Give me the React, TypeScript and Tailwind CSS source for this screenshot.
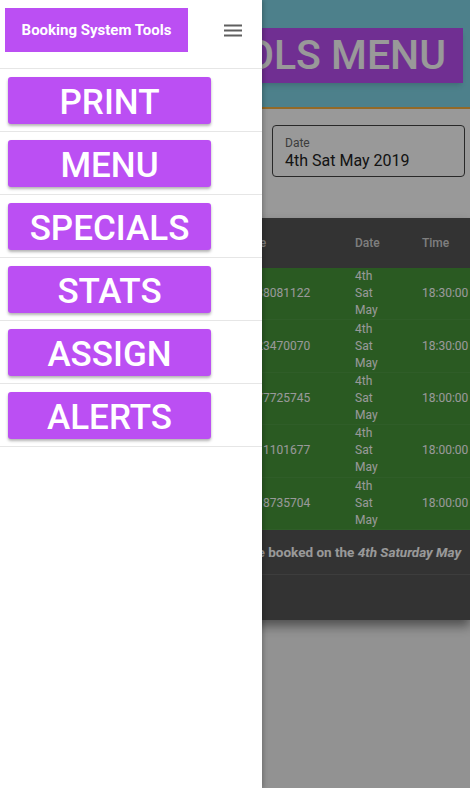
import { useState } from 'react';

interface Booking {
  name: string;
  phone: string;
  time: string;
}

const bookings: Booking[] = [
  { name: 'J. Clarke', phone: '07738081122', time: '18:30:00' },
  { name: 'S. Patel', phone: '07723470070', time: '18:30:00' },
  { name: 'M. Evans', phone: '07977725745', time: '18:00:00' },
  { name: 'R. Hughes', phone: '07811101677', time: '18:00:00' },
  { name: 'L. Owen', phone: '07718735704', time: '18:00:00' },
];

const menuItems = ['PRINT', 'MENU', 'SPECIALS', 'STATS', 'ASSIGN', 'ALERTS'];

function HamburgerIcon() {
  return (
    <svg width="18" height="13" viewBox="0 0 18 13" className="text-[#5f5f5f]">
      <rect x="0" y="0.5" width="18" height="2" fill="currentColor" />
      <rect x="0" y="5.5" width="18" height="2" fill="currentColor" />
      <rect x="0" y="10.5" width="18" height="2" fill="currentColor" />
    </svg>
  );
}

function BookingTable() {
  return (
    <div className="bg-[#555555] text-white shadow-[0_6px_10px_rgba(0,0,0,0.45)]">
      {/* Column headings */}
      <div className="grid h-[50px] grid-cols-[232px_123px_67px_48px] items-center text-[12px] font-medium text-white/75">
        <span className="pl-4">Name</span>
        <span>Phone</span>
        <span>Date</span>
        <span>Time</span>
      </div>

      {/* Rows */}
      {bookings.map((b) => (
        <div
          key={b.phone}
          className="grid h-[52.4px] grid-cols-[236px_119px_67px_48px] items-center border-b border-white/5 bg-[#46963a] text-[12px] leading-[17px]"
        >
          <span className="pl-4">{b.name}</span>
          <span>{b.phone}</span>
          <span className="flex flex-col">
            <span>4th</span>
            <span>Sat</span>
            <span>May</span>
          </span>
          <span>{b.time}</span>
        </div>
      ))}

      {/* Footer note */}
      <div className="flex h-[45px] items-center justify-end whitespace-nowrap border-b border-white/10 pr-[9px] text-[13.5px] font-bold">
        All tables are booked on the&nbsp;<i>4th Saturday May</i>
      </div>
      <div className="h-[45px]" />
    </div>
  );
}

export default function App() {
  const [date] = useState('4th Sat May 2019');

  return (
    <div className="relative h-[788px] w-[470px] overflow-hidden bg-[#f3f3f3] font-['Roboto',sans-serif]">
      {/* Page behind the drawer */}
      <header className="flex h-[109px] items-start justify-end border-b-2 border-[#f5b042] bg-[#80d6e8] pr-[7px] pt-[28px]">
        <div className="flex h-[55px] items-center justify-center bg-[#bb4ff3] px-[17px] text-[41px] font-medium text-white shadow-md">
          TOOLS MENU
        </div>
      </header>

      <div className="flex h-[109px] justify-end bg-white pr-[5px] pt-[16px]">
        <div className="h-[52px] w-[193px] rounded-[4px] border border-[#444] px-[12px] pt-[10px]">
          <div className="text-[12px] leading-[15px] text-[#666]">Date</div>
          <div className="text-[16px] leading-[20px] text-[#222]">{date}</div>
        </div>
      </div>

      <BookingTable />

      {/* Backdrop */}
      <div className="absolute inset-0 bg-black/40" />

      {/* Drawer */}
      <aside className="absolute left-0 top-0 h-full w-[262px] bg-white shadow-[2px_0_4px_rgba(0,0,0,0.2)]">
        <div className="flex h-[69px] items-start border-b border-[#e6e6e6] pl-[5px] pt-[8px]">
          <div className="flex h-[44px] w-[183px] items-center justify-center bg-[#bb4ff3] text-[15px] font-bold text-white">
            Booking System Tools
          </div>
          <div className="ml-[36px] mt-[16px]">
            <HamburgerIcon />
          </div>
        </div>

        {menuItems.map((item) => (
          <div key={item} className="border-b border-[#e6e6e6] pb-[7px] pl-[8px] pt-[8px]">
            <button className="flex h-[47px] w-[203px] items-center justify-center rounded-[3px] bg-[#bb4ff3] pt-[3px] text-[35px] font-medium leading-none text-white shadow-[0_2px_3px_rgba(0,0,0,0.3)]">
              {item}
            </button>
          </div>
        ))}
      </aside>
    </div>
  );
}
